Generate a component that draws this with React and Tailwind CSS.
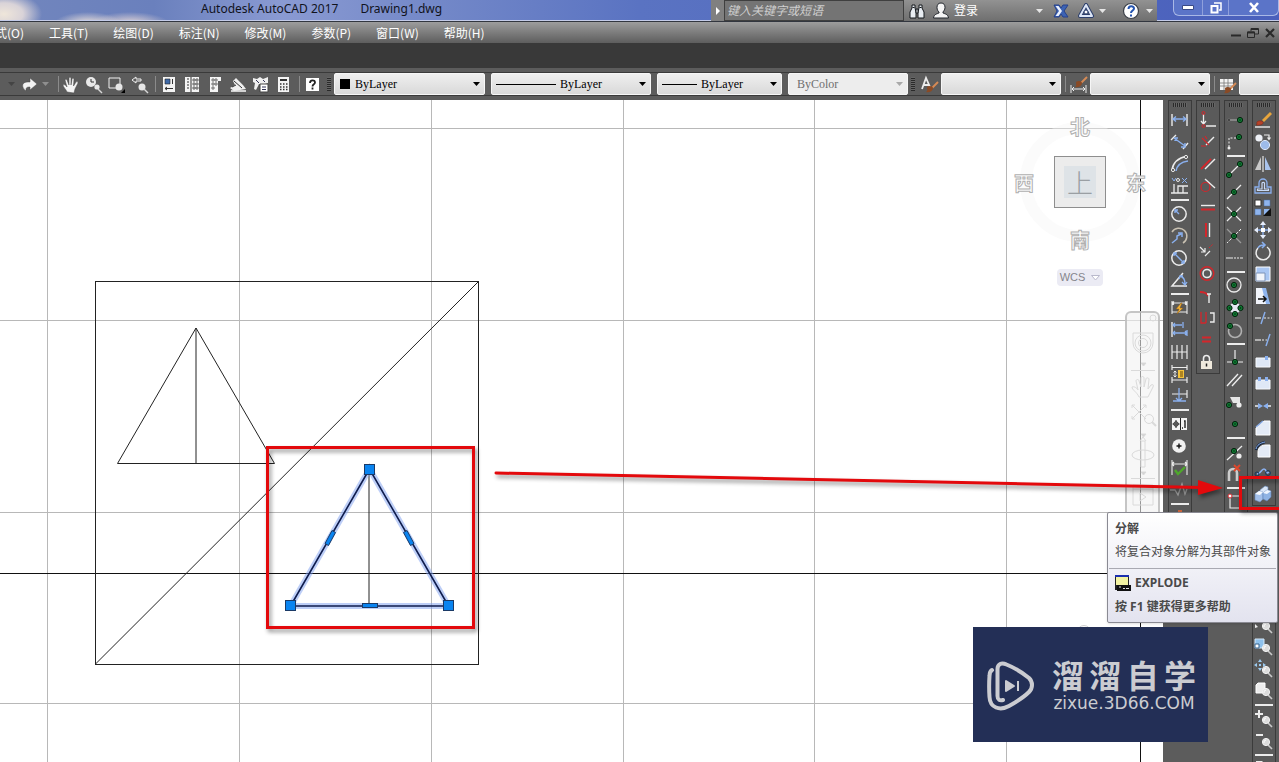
import { useState } from "react";

const W = "#ececec";
const B = "#8ab0ee";
const R = "#d3262b";
const G = "#9a9a9a";

const UI_FONT = "font-['Noto_Sans','Noto_Sans_CJK_SC',sans-serif]";
const CJK_FONT = "font-['Noto_Sans_CJK_SC',sans-serif]";

/* ---------- small drawing helpers ---------- */

function Dot({ x, y }) {
  return (
    <>
      <circle cx={x} cy={y} r="2.6" fill="#0f7d34" stroke="#03210c" />
      <circle cx={x} cy={y} r="0.8" fill="#03210c" />
    </>
  );
}

function Caret({ className = "text-black" }) {
  return (
    <svg width="7" height="4" viewBox="0 0 7 4" className={`shrink-0 ${className}`} aria-hidden="true">
      <path d="M0 0h7L3.5 4z" fill="currentColor" />
    </svg>
  );
}

function Brush({ x = 0, y = 0 }) {
  return (
    <g transform={`translate(${x} ${y})`}>
      <path d="M4 5 L10 -1" stroke="#d58a55" strokeWidth="2" />
      <path d="M-1 4c2-2 6-1 6 1s-2 5-7 4c2-1 1-3 1-5z" fill="#8a4a25" />
    </g>
  );
}

function Lens({ x = 13, y = 12 }) {
  return (
    <>
      <path d={`M${x + 2} ${y + 3}l4 4`} stroke="#c9c9c9" strokeWidth="1.6" />
      <circle cx={x} cy={y} r="3.6" fill="#dcdcdc" stroke="#f4f4f4" />
      <path d={`M${x - 2} ${y + 1}a2.4 2.4 0 0 1 2-3`} stroke="#fff" />
    </>
  );
}

const DimEnds = <path d="M3 5v12M18 5v12" stroke={W} strokeWidth="1.4" />;

/* ---------- icons for the docked toolbars, 22x22 ---------- */

const icons = {
  // dimension
  dimLinear: <>{DimEnds}<path d="M4 10h13M7 7.5l-3 2.5 3 2.5M14 7.5l3 2.5-3 2.5" stroke={B} strokeWidth="1.4" /></>,
  dimAligned: <><path d="M7 4l-5 5M19 12l-5 6" stroke={W} strokeWidth="1.4" /><path d="M5 7l11 8M6 10V7h3M16 12v4h-4" stroke={B} strokeWidth="1.4" /></>,
  dimArc: <><path d="M3 17C4 9 9 5 18 3" stroke={W} strokeWidth="1.6" /><path d="M7 18c1-6 5-9 12-10" stroke={B} strokeWidth="1.5" /><circle cx="4" cy="17" r="1.6" fill="#555" stroke={W} /><circle cx="17" cy="4" r="1.6" fill="#555" stroke={W} /></>,
  dimOrdinate: <><path d="M5 9v9M2 18h17M9 18v-7h5v7M14 11h5" stroke={W} strokeWidth="1.3" /><path d="M3 3l2 3 2-3M13 3l5 5M18 3l-5 5" stroke={B} /><circle cx="9" cy="5" r="1.5" stroke={W} /></>,
  dimRadius: <><circle cx="10" cy="11" r="7.2" stroke={W} strokeWidth="1.5" /><path d="M10 11L6 7M6 10V7h3" stroke={B} strokeWidth="1.4" /></>,
  dimJogged: <><path d="M3 7a8 8 0 1 1 11 11" stroke="#c9c1b2" strokeWidth="1.5" /><path d="M3 18l5-4 0-3 4-2M9 8h4v4" stroke={B} strokeWidth="1.5" /></>,
  dimDiameter: <><circle cx="10" cy="11" r="7.2" stroke={W} strokeWidth="1.5" /><path d="M5 6l10 10M5 9V6h3M15 13v3h-3" stroke={B} strokeWidth="1.4" /></>,
  dimAngular: <><path d="M14 4L3 17h15" stroke={W} strokeWidth="1.5" /><path d="M11 7c4 1 5 4 5 8M13 13l3 3 2-3M10 10l1-3 3 0" stroke={B} strokeWidth="1.3" /></>,
  dimQuick: <><path d="M3 4v13M18 4v13M3 6h15M3 15h15M5 4.500L3 6l2 1.500M16 4.500L18 6l-2 1.500" stroke={W} strokeWidth="1.1" /><path d="M12 6l-5 6h3l-2 5 6-6h-3l2-5z" fill="#f5b53a" stroke="#8e5a12" strokeWidth="0.5" /></>,
  dimBaseline: <><path d="M3 3v15" stroke={W} strokeWidth="1.4" /><path d="M4 6h9M4 14h14M14 3v6M18 11v6M6 4L4 6l2 2M6 12l-2 2 2 2M16 12l2 2-2 2" stroke={B} strokeWidth="1.3" /></>,
  dimContinue: <><path d="M3 4v14M8 4v14M13 4v14M18 4v14" stroke={W} strokeWidth="1.2" /><path d="M3 11h15" stroke={W} /></>,
  dimSpace: <><path d="M3 2v5M18 2v5M3 4.500h15M3 14v6M18 14v6M3 17h15" stroke={W} strokeWidth="1.2" /><path d="M9 7h6v8H9z" fill="#f5c33c" /><path d="M11 9h3M11 11h3M11 13h3" stroke="#6b4607" /><path d="M6 8v6M4.500 9.500L6 8l1.500 1.500M4.500 12.500L6 14l1.500-1.500" stroke={W} /></>,
  dimBreak: <><path d="M3 9h15M18 5v8" stroke={W} strokeWidth="1.2" /><path d="M10 3v13M4 16h13M7 13l3 3 3-3" stroke={B} strokeWidth="1.3" /></>,
  tolerance: <><path d="M3 5h15v12H3z" fill="#f4f4f4" /><path d="M11.500 5v12M7 7v8M3.500 11h7" stroke="#222" /><circle cx="7" cy="11" r="2.200" stroke="#222" /><path d="M13 15h1M15 8h1v7" stroke="#222" strokeWidth="1.4" /></>,
  centerMark: <><circle cx="10" cy="11" r="6.8" fill="#f0f0f0" /><path d="M10 8.500v5M7.500 11h5" stroke="#111" strokeWidth="1.4" /></>,
  inspect: <><path d="M3 3v15M18 3v15M3 7h15M5 5L3 7l2 2M16 5l2 2-2 2" stroke={W} strokeWidth="1.1" /><path d="M6 13l3 4 7-7" stroke="#4ea82b" strokeWidth="2.4" /></>,
  jogLine: <path d="M1 11h5l3 5 4-11 3 10 2-5" stroke={G} strokeWidth="1.4" />,
  dimEdit: <><path d="M3 5v12M18 5v12M4 12h14" stroke={W} /><path d="M9 4h4" stroke="#c8643c" strokeWidth="2" /></>,

  // geometric constraints
  coincident: <><path d="M6.500 5v10M4 12l2.500 3L9 12M9 17h10" stroke={W} strokeWidth="1.3" /><circle cx="6.500" cy="4" r="1.5" stroke={R} /><circle cx="6.500" cy="17" r="1.5" stroke={R} /></>,
  perpendicular: <><path d="M9 14l8-8" stroke={W} strokeWidth="1.4" /><path d="M5 7l7 7M4 15l5 0M8 5l2 3" stroke={R} strokeWidth="1.2" /></>,
  parallel: <><path d="M8 16L18 6" stroke={W} strokeWidth="1.5" /><path d="M4 16L14 6" stroke={R} strokeWidth="1.8" /></>,
  tangent: <><circle cx="8.5" cy="12" r="4.5" stroke={R} strokeWidth="1.2" /><path d="M8 4l10 9" stroke={W} strokeWidth="1.4" /></>,
  horizontal: <><path d="M4 8.500h14" stroke={W} strokeWidth="1.4" /><path d="M4 12.500h14" stroke={R} strokeWidth="2" /></>,
  vertical: <><path d="M12.500 4v14" stroke={W} strokeWidth="1.4" /><path d="M9 4v14" stroke={R} strokeWidth="2" /></>,
  collinear: <><path d="M3 6l5 5M8 7v4H4M8 15l5-5" stroke={W} strokeWidth="1.2" /><path d="M12 7l4-4" stroke={R} strokeDasharray="2 1" /></>,
  concentric: <><circle cx="10" cy="10.5" r="6.8" stroke={R} strokeWidth="1.4" /><circle cx="10" cy="10.5" r="4" stroke={W} strokeWidth="1.6" /></>,
  smooth: <><path d="M3 7c5 0 7 1 8 4" stroke={R} strokeWidth="1.8" /><path d="M10 9h4M12 9v9" stroke={W} strokeWidth="1.4" /></>,
  symmetric: <><path d="M4 5v11h3M9 5v11M4 16h5" stroke={R} strokeWidth="1.3" /><path d="M13 6h4v9h-4" stroke={W} strokeWidth="1.4" /></>,
  equal: <path d="M5 8.500h9M5 12.500h9" stroke={R} strokeWidth="2" />,
  fix: <><path d="M6.500 11V7.500a3 3 0 0 1 6 0v3.500" stroke={W} strokeWidth="1.6" /><path d="M4 10h11v8H4z" fill="#efe9dc" /><path d="M9.500 12.500v3" stroke="#222" strokeWidth="1.5" /></>,

  // object snaps
  snapTemp: <><path d="M4 11h10" stroke={G} strokeWidth="1.4" /><circle cx="4" cy="11" r="1.2" fill="#111" stroke={G} strokeWidth="0.5" /><Dot x={15} y={11} /></>,
  snapFrom: <><path d="M4 16V7h10" stroke={W} strokeDasharray="2 1.5" /><circle cx="4" cy="17" r="1.5" fill={W} /><Dot x={14} y={6} /></>,
  snapEnd: <><path d="M4 16L14 6" stroke={W} strokeWidth="1.3" /><Dot x={4} y={16} /><Dot x={15} y={5} /></>,
  snapMid: <><path d="M2 18L16 4" stroke={W} strokeWidth="1.3" /><Dot x={9} y={11} /></>,
  snapInt: <><path d="M2 4l14 14M16 4L2 18" stroke={W} strokeWidth="1.2" /><Dot x={9} y={11} /></>,
  snapApp: <><path d="M2 4l14 14" stroke={G} strokeWidth="1.2" /><path d="M16 4L2 18" stroke={W} strokeDasharray="3 1.5" /><Dot x={9} y={11} /></>,
  snapExt: <path d="M1 11h7M9 11h2M12 11h2M15 11h3" stroke={W} strokeWidth="1.2" />,
  snapCen: <><circle cx="9" cy="10" r="7" stroke={W} strokeWidth="1.3" /><Dot x={9} y={10} /></>,
  snapQua: <><circle cx="10" cy="11" r="5.5" fill="#e4e9f2" /><Dot x={10} y={5} /><Dot x={10} y={17} /><Dot x={4.5} y={11} /><Dot x={15.5} y={11} /></>,
  snapTan: <><circle cx="10" cy="12" r="6.5" stroke="#b0b0b0" strokeWidth="1.6" /><Dot x={5} y={7} /></>,
  snapPer: <><path d="M10 3v13M2 15h16" stroke={W} strokeWidth="1.2" /><Dot x={10} y={15} /></>,
  snapPar: <path d="M2 17L13 5M7 17L17 6" stroke={W} strokeWidth="1.4" />,
  snapIns: <><path d="M5 6h10v6H8z" fill="#e6e6e6" /><circle cx="14" cy="14" r="2.6" fill={W} /><Dot x={4} y={14} /></>,
  snapNode: <Dot x={10} y={11} />,
  snapNea: <><path d="M2 19L17 5" stroke={W} strokeWidth="1.3" /><circle cx="14" cy="15" r="2.6" fill={W} /><Dot x={9} y={10} /></>,
  snapNone: <><path d="M4 18V10a4 4 0 0 1 8 0v8" stroke="#cdcdcd" strokeWidth="2.600" /><path d="M9 2l6 6M15 2L9 8" stroke="#e0472b" strokeWidth="1.8" /></>,
  snapSettings: <><path d="M5 5h9M5 5v12h9" stroke={W} strokeWidth="1.2" /><circle cx="5" cy="5" r="2" fill="#fff" stroke={R} /></>,

  // modify
  erase: <><path d="M10 12l8-8" stroke="#e8a53c" strokeWidth="2.8" /><path d="M4 13c2-2 5-1 6 0s-1 4-7 3c2-1 0-2 1-3z" fill="#b6432a" stroke="#7d2514" strokeWidth="0.5" /><path d="M2 18h15" stroke={W} strokeWidth="1.4" /></>,
  copy: <><circle cx="6" cy="7" r="3.6" fill="#eef1f7" /><circle cx="12" cy="14" r="4.6" fill="#9dbbe9" stroke="#dfe8f7" /><path d="M11 4h5v4M14.500 6.500L16 8.500l1.500-2" stroke={W} strokeWidth="1.2" /></>,
  mirror: <><path d="M8 4v13H2z" fill="#c9c9c9" /><path d="M12 4v13h6z" fill="#a9c3ec" /><path d="M10 3v16" stroke="#fff" /></>,
  offset: <><path d="M2 18v-6h4V8a4 4 0 0 1 8 0v4h4v6z" stroke={B} strokeWidth="1.3" /><path d="M4.500 15.500v-1.500H9V8a1.500 1.500 0 0 1 2.500 0v6h4v1.500z" stroke="#c8daf7" strokeWidth="1.2" /></>,
  array: <><path d="M2 3h6v6H2z" fill="#fff" stroke="#333" /><path d="M11 3h6v6h-6zM2 12h6v6H2z" fill="#8fb5ee" stroke="#4a6da5" strokeWidth="0.5" /><path d="M11 12h6v6h-6z" fill="#8fb5ee" /><path d="M18 11v8h-8z" fill="#111" /></>,
  move: <><path d="M10 2l3 4H7zM10 20l3-4H7zM1 11l4-3v6zM19 11l-4-3v6z" fill="#e8eefb" /><path d="M10 6v10M5 11h10" stroke={B} strokeWidth="1.4" /><path d="M8 9h4v4H8z" fill="#fff" /></>,
  rotate: <><path d="M5 7a7 7 0 1 0 9-1" stroke={W} strokeWidth="1.5" /><path d="M5 7c1-2 3-3 6-3M9 1l3 3-3 3" stroke={B} strokeWidth="1.6" /></>,
  scale: <><path d="M3 4h14v14H3z" fill="#a9c6f2" stroke="#fff" /><path d="M3 10h9v8H3z" fill="#f1f4fa" stroke="#7d93b8" /></>,
  stretch: <><path d="M3 3h7l7 16H3z" fill="#f1f4fa" /><path d="M9 3h4l4 16h-4z" fill="#8fb5ee" /><path d="M5 14h8M10 11l3 3-3 3" stroke="#111" strokeWidth="1.5" /></>,
  trim: <><path d="M12 5L8 17" stroke={B} strokeWidth="1.4" /><path d="M2 11h6" stroke={W} strokeWidth="1.2" /><path d="M11 11h8" stroke={W} strokeDasharray="2 1.5" /></>,
  extend: <><path d="M17 5l-4 12" stroke={B} strokeWidth="1.4" /><path d="M2 11h6" stroke={W} strokeWidth="1.2" /><path d="M9 11h5" stroke={W} strokeDasharray="2 1.5" /></>,
  breakPoint: <><path d="M3 7h14v9H3z" fill="#dfe8f6" stroke="#f7f9fc" /><path d="M12 5h3v4h-3z" fill={B} /></>,
  breakAt: <><path d="M3 7h14v9H3z" fill="#dfe8f6" stroke="#f7f9fc" /><path d="M5 4h3v4H5zM12 4h3v4h-3z" fill={B} /></>,
  join: <><path d="M2 11h5M13 11h5" stroke={W} strokeWidth="1.4" /><path d="M5 8l5 3-5 3zM15 8l-5 3 5 3z" fill={B} /></>,
  chamfer: <><path d="M3 18V11l8-7h6v14z" fill="#e4ebf6" stroke="#fff" /><path d="M3 10l7-6" stroke={B} strokeWidth="1.2" /></>,
  fillet: <><path d="M5 18v-5c0-5 4-7 8-7h4v12z" fill="#e4ebf6" stroke="#fff" /><path d="M3 11c1-5 4-7 9-8" stroke="#1b2940" strokeWidth="2.4" /><path d="M3 10c1-4 4-6 9-7" stroke={B} /></>,
  blend: <><path d="M4 13c4 0 4-5 7-5s2 6 5 3" stroke={B} strokeWidth="1.6" /><circle cx="4" cy="13" r="2" stroke="#14375e" /><circle cx="15" cy="12" r="2.4" stroke="#14375e" /></>,
  explode: <>
    <path d="M7 7l5-4 3 1v5l-4 3-4-1z" fill="#dbe7f8" stroke="#6d8fc0" strokeWidth="0.6" />
    <path d="M2 11l4-3 4 1v7l-3 3-5-2z" fill="#a3c0ea" stroke="#6d8fc0" strokeWidth="0.6" />
    <path d="M2 11l4-3 4 1-3 3z" fill="#f6f9fe" />
    <path d="M10 10l4-3 4 1v6l-4 4-4-2z" fill="#8fb3e4" stroke="#5f83b8" strokeWidth="0.6" />
    <path d="M10 10l4-3 4 1-4 3z" fill="#eef4fd" />
  </>,

  // zoom
  zoomWindow: <><path d="M2 4h9v8H2z" stroke={W} /><Lens /></>,
  zoomDynamic: <><path d="M2 10l3 3-3 1z" fill={W} /><Lens /></>,
  zoomScale: <><path d="M2 3h9v9H2z" fill="#8ec1ec" stroke="#d4e8f9" /><path d="M2 8h4v4H2z" fill="#fff" stroke="#35638d" /><Lens /></>,
  zoomCenter: <><path d="M7 1l2 3H5zM7 13l2-3H5zM1 7l3-2v4zM13 7l-3-2v4z" fill="#9ccbf0" /><path d="M6 6h2v2H6z" fill="#9ccbf0" /><Lens /></>,
  zoomObject: <><path d="M3 5l2-2h7v8l-2 2H3z" fill="#ececec" stroke="#fff" /><Lens /></>,
  zoomIn: <><path d="M6 2v8M2 6h8" stroke={W} strokeWidth="2" /><Lens /></>,
  zoomOut: <><path d="M3 5h7" stroke={W} strokeWidth="2" /><Lens /></>,
  zoomAll: <><path d="M3 3h6l3 3v8H3z" fill="#ececec" /><Lens /></>,
};

const SEP = "|";

const dimensionBar = [
  "dimLinear", "dimAligned", "dimArc", "dimOrdinate", SEP,
  "dimRadius", "dimJogged", "dimDiameter", "dimAngular", SEP,
  "dimQuick", "dimBaseline", "dimContinue", "dimSpace", "dimBreak", SEP,
  "tolerance", "centerMark", "inspect", "jogLine", SEP, "dimEdit",
];
const constraintBar = [
  "coincident", "perpendicular", "parallel", "tangent", "horizontal", "vertical",
  "collinear", "concentric", "smooth", "symmetric", "equal", "fix",
];
const snapBar = [
  "snapTemp", "snapFrom", SEP,
  "snapEnd", "snapMid", "snapInt", "snapApp", "snapExt", SEP,
  "snapCen", "snapQua", "snapTan", SEP,
  "snapPer", "snapPar", "snapIns", "snapNode", SEP,
  "snapNea", "snapNone", SEP, "snapSettings",
];
const modifyBar = [
  "erase", "copy", "mirror", "offset", "array", "move", "rotate", "scale", "stretch",
  "trim", "extend", "breakPoint", "breakAt", "join", "chamfer", "fillet", "blend", "explode",
];
const zoomBar = [
  "zoomWindow", "zoomDynamic", "zoomScale", "zoomCenter", "zoomObject", SEP,
  "zoomIn", "zoomOut", SEP, "zoomAll",
];

function Dock({ label, tools }) {
  return (
    <div role="toolbar" aria-label={label} className="w-6 shrink-0 flex flex-col border border-[#3b3b3b] bg-[#5a5a5a]">
      <div className="h-2 pt-0.5 px-1">
        <div className="h-1 bg-[repeating-linear-gradient(90deg,#2a2a2a_0_1px,#666_1px_2px)]" />
      </div>
      {tools.map((name, i) =>
        name === SEP ? (
          <div key={i} className="h-1.5 flex items-center px-0.5">
            <div className="h-0.5 w-full bg-[#ececec]" />
          </div>
        ) : (
          <button key={i} type="button" aria-label={name} className="h-[22px] w-[22px] shrink-0 hover:bg-white/20">
            <svg width="22" height="22" viewBox="0 0 22 22" fill="none" className="block">
              {icons[name]}
            </svg>
          </button>
        )
      )}
    </div>
  );
}

/* ---------- title bar ---------- */

function TitleBar() {
  return (
    <header className="h-[22px] flex overflow-hidden border-b border-[#32363f] bg-[radial-gradient(ellipse_38px_22px_at_4px_14px,#efe6da_0%,#d9d3d8_50%,transparent_100%),radial-gradient(ellipse_34px_12px_at_88px_24px,#f3e6dc_0%,transparent_100%),radial-gradient(ellipse_40px_12px_at_130px_24px,#ecdcd8_0%,transparent_100%),linear-gradient(90deg,#7286bd_0%,#6a80bd_12%,#8a9ad2_22%,#7388c8_34%,#5a73c2_50%,#4a60bc_100%)]">
      <h1 className={`flex-1 min-w-0 flex items-center gap-[22px] pl-[201px] pb-0.5 text-xs leading-5 whitespace-nowrap text-[#11131c] border-b border-[#c3cbe8] ${UI_FONT}`}>
        <span>Autodesk AutoCAD 2017</span>
        <span>Drawing1.dwg</span>
      </h1>
      <div className={`w-[446px] shrink-0 flex items-center bg-linear-to-b from-[#929292] to-[#6f6f6f] text-xs text-white ${UI_FONT}`}>
        <button type="button" aria-label="折叠搜索" className="w-[13px] h-full flex items-center justify-center bg-[#808080]">
          <svg width="4" height="8" viewBox="0 0 4 8"><path d="M0 0l4 4-4 4z" fill="#fff" /></svg>
        </button>
        <input
          aria-label="搜索"
          placeholder="键入关键字或短语"
          className="w-[180px] h-full bg-[#747474] border border-[#3f3f3f] px-0.5 italic text-xs placeholder:text-[#cfcfcf]"
        />
        <button type="button" aria-label="查找" className="ml-1">
          <svg width="18" height="18" viewBox="0 0 18 18" stroke="#15181d" fill="#e8edf2">
            <path d="M4 3h3v3l1 4v6H2v-6l2-4zM11 3h3v3l2 4v6h-6v-6l1-4z" />
            <path d="M8 7h2v4H8z" />
            <path d="M4.500 5.500h2M11.500 5.500h2" />
          </svg>
        </button>
        <button type="button" className="ml-1.5 flex items-center gap-1">
          <svg width="18" height="18" viewBox="0 0 18 18" stroke="#22262d" fill="#f4f4f4">
            <path d="M9 1c3 0 4 2 4 4.500S11.500 9 11 10v1c2 1 5 1 5.500 5h-15C2 12 5 12 7 11v-1C6 9 5 8 5 5.500S6 1 9 1z" />
          </svg>
          <span>登录</span>
        </button>
        <Caret className="ml-[58px] text-[#e6e6e6]" />
        <button type="button" aria-label="Exchange" className="ml-2.5">
          <svg width="16" height="14" viewBox="0 0 16 14" stroke="#26418b" fill="none">
            <path d="M1 1h5l2 3 2-3h5l-4 6 4 6h-5l-2-3-2 3H1l3-6z" fill="#3d63b4" />
            <path d="M2.500 2h3L9 7l-3.500 5h-3L6 7z" fill="#eaf0fc" stroke="none" />
          </svg>
        </button>
        <button type="button" aria-label="A360" className="ml-2 flex items-center gap-1">
          <svg width="18" height="16" viewBox="0 0 18 16" fill="none">
            <path d="M9 2l6 11H3z" stroke="#2c3f6d" strokeWidth="4" strokeLinejoin="round" />
            <path d="M9 2l6 11H3z" stroke="#dde6f6" strokeWidth="2" strokeLinejoin="round" />
            <circle cx="9" cy="9" r="2" fill="#fff" stroke="#2c3f6d" />
          </svg>
          <Caret className="text-[#e6e6e6]" />
        </button>
        <button type="button" aria-label="帮助" className="ml-auto mr-1 flex items-center gap-1.5">
          <svg width="18" height="18" viewBox="0 0 18 18" fill="none">
            <circle cx="9" cy="9" r="7.5" fill="#fff" stroke="#3b3f47" strokeWidth="1.2" />
            <path d="M6.500 7c0-3.500 5.500-3.500 5.500-.5 0 2-3 2-3 4.500M9 12.500v2" stroke="#2454b0" strokeWidth="2" />
          </svg>
          <Caret className="text-[#e6e6e6]" />
        </button>
      </div>
      <div className="w-[122px] shrink-0 pl-4 border-b border-[#c3cbe8]">
        <div className="h-4 flex border border-t-0 border-[#a9b8e6] rounded-b-md divide-x divide-[#8fa0dc] bg-[#5b74c8]">
          <button type="button" aria-label="最小化" className="w-[29px] flex justify-center items-center">
            <svg width="12" height="5" viewBox="0 0 12 5"><path d="M.5.5h11v4H.5z" fill="#fff" stroke="#3a4a86" /></svg>
          </button>
          <button type="button" aria-label="还原" className="w-[26px] flex justify-center items-center">
            <svg width="12" height="12" viewBox="0 0 12 12" fill="none">
              <path d="M4 1h7v7h-2" stroke="#fff" strokeWidth="1.5" />
              <path d="M1.500 4h6v6.500h-6z" stroke="#fff" strokeWidth="2" />
            </svg>
          </button>
          <button type="button" aria-label="关闭" className="flex-1 flex justify-center items-center">
            <svg width="12" height="11" viewBox="0 0 12 11"><path d="M2 1l8 9M10 1L2 10" stroke="#fff" strokeWidth="2.6" /></svg>
          </button>
        </div>
      </div>
    </header>
  );
}

/* ---------- menu bar ---------- */

const menus = ["格式(O)", "工具(T)", "绘图(D)", "标注(N)", "修改(M)", "参数(P)", "窗口(W)", "帮助(H)"];

function MenuBar() {
  return (
    <nav className="h-[21px] flex items-center justify-between overflow-hidden bg-linear-to-b from-[#9d9d9d] to-[#5e5e5e]">
      <div className={`-ml-[17px] flex gap-[25px] text-xs leading-5 text-white whitespace-nowrap ${CJK_FONT}`}>
        {menus.map((m) => (
          <button key={m} type="button">{m}</button>
        ))}
      </div>
      <div className="flex items-center gap-1.5 pr-1">
        <button type="button" aria-label="最小化图形">
          <svg width="11" height="11" viewBox="0 0 11 11"><path d="M1 8.500h10" stroke="#2a2a2a" strokeWidth="2" /></svg>
        </button>
        <button type="button" aria-label="还原图形">
          <svg width="12" height="12" viewBox="0 0 12 12" fill="none" stroke="#2a2a2a">
            <path d="M4 4V1.500h7.500V7H8" /><path d="M4 2h7" strokeWidth="2" />
            <path d="M.5 5h7v5.500h-7z" /><path d="M.5 5.500h7" strokeWidth="2" />
          </svg>
        </button>
        <button type="button" aria-label="关闭图形">
          <svg width="10" height="10" viewBox="0 0 10 10"><path d="M1 1l8 8M9 1L1 9" stroke="#2a2a2a" strokeWidth="2.2" /></svg>
        </button>
      </div>
    </nav>
  );
}

/* ---------- standard + properties toolbar ---------- */

const standardTools = [
  { label: "实时平移", d: <path d="M6 17c-1-3-4-5-4-7 1-1 3 0 4 2L4 5c0-1 2-1 2 0l2 5V3c0-1 2-1 2 0v7l1-6c0-1 2-1 2 0l-.5 7L15 7c1-1 2 0 2 1l-3 6-1 4z" fill="#f4f4f4" stroke="#444" strokeWidth="0.5" /> },
  { label: "实时缩放", d: <><circle cx="7" cy="7" r="5" fill="#e9e9e9" /><path d="M7 4v3h3" stroke="#333" /><circle cx="13" cy="12" r="2.6" fill="#e9e9e9" /><path d="M14 14l4 4" stroke="#d8d8d8" strokeWidth="1.5" /></> },
  { label: "窗口缩放", d: <><path d="M2 3h11v10H2z" stroke="#f0f0f0" /><circle cx="12" cy="12" r="3.5" fill="#e6e6e6" /><path d="M18 14v4h-4z" fill="#000" /></> },
  { label: "缩放上一个", d: <><path d="M2 5l4-3v2h5v2H6v2z" stroke="#f0f0f0" /><circle cx="12" cy="12" r="3.5" fill="#e6e6e6" /><path d="M14 14l4 4" stroke="#d8d8d8" strokeWidth="1.5" /></> },
];
const paletteTools = [
  { label: "特性", d: <><path d="M4 2h12v15H4z" fill="#f4f4f4" /><path d="M6 4h5v5H6z" fill="#3f6aa8" stroke="#222" strokeWidth="0.6" /><path d="M13.500 4v5M6 13.500h8M8 12l-2 1.500L8 15" stroke="#333" /></> },
  { label: "设计中心", d: <><path d="M3 2h14v15H3z" fill="#f4f4f4" /><path d="M9 2v15M5 4h2M5 7h2M5 10h2M5 13h2" stroke="#333" /><path d="M11 4h2v2h-2zM14 4h2v2h-2zM11 8h2v2h-2zM14 8h2v2h-2zM11 12h2v2h-2zM14 12h2v2h-2z" stroke="#444" strokeWidth="0.8" /></> },
  { label: "工具选项板", d: <><path d="M5 2h11v4h-3v11H5z" fill="#f4f4f4" /><path d="M7 4h2v2H7zM10 4h2v2h-2zM7 8h2v2H7zM10 8h2v2h-2zM7 12h2v2H7z" stroke="#555" strokeWidth="0.8" /></> },
  { label: "图纸集管理器", d: <><path d="M2 13l5-3-2-4 3-3 7 7 3 4-12 2z" fill="#f0f0f0" /><path d="M6 6l8 7M4 12l4-2" stroke="#333" /><path d="M3 16h15" stroke="#f0f0f0" strokeWidth="1.6" /></> },
  { label: "标记集管理器", d: <><path d="M2 3l4 1 3-2 3 2 5-2v6l-3 1H8l-3 6-2-1 1-6-2-1z" fill="#f0f0f0" /><path d="M9 9h8v8H9z" fill="#fff" stroke="#444" /><path d="M11 12h4M11 14.500h4M5 5l3 3M12 5l2 2" stroke="#335" /></> },
  { label: "快速计算器", d: <><path d="M4 2h11v15H4z" fill="#f4f4f4" /><path d="M6 5h7" stroke="#333" strokeWidth="2" /><path d="M6 9h1.500M9 9h1.500M12 9h1.500M6 12h1.500M9 12h1.500M12 12h1.500M6 14.500h1.500M9 14.500h1.500M12 14.500h1.500" stroke="#333" strokeWidth="1.4" /></> },
];

function Tool({ label, children }) {
  return (
    <button type="button" aria-label={label} className="w-[23px] h-full shrink-0 flex items-center justify-center">
      <svg width="19" height="19" viewBox="0 0 19 19" fill="none">{children}</svg>
    </button>
  );
}

function VSep() {
  return <div className="w-px h-4 ml-1 mr-px shrink-0 bg-[#8b8b8b]" />;
}

function Grip() {
  return (
    <div className="w-1 h-3.5 mx-[3px] shrink-0 bg-[repeating-linear-gradient(0deg,#2a2a2a_0_1px,#666_1px_2px)]" />
  );
}

function Combo({ label, value, width, lead, disabled }) {
  const [v, setV] = useState(value);
  return (
    <div
      className={`relative h-[22px] shrink-0 flex items-center rounded-xs border border-[#f6f6f6] px-1 gap-1 ${width} ${
        disabled ? "bg-[#ededed]" : "bg-linear-to-b from-[#efefef] to-[#d9d9d9]"
      }`}
    >
      {lead}
      <select
        aria-label={label}
        value={v}
        disabled={disabled}
        onChange={(e) => setV(e.target.value)}
        className={`flex-1 min-w-0 h-full appearance-none bg-transparent text-xs outline-none font-['Liberation_Serif',serif] ${
          disabled ? "text-[#6f6f6f] pl-1" : "text-black"
        }`}
      >
        <option value={value}>{value}</option>
      </select>
      <Caret className={`pointer-events-none ${disabled ? "text-[#a9a9a9]" : "text-black"}`} />
    </div>
  );
}

function Toolbar() {
  return (
    <div className="shrink-0 py-1 bg-[#5c5c5c]">
      <div className="h-6 flex items-center overflow-hidden border-y border-[#3a3a3a]">
        <div className="w-[58px] shrink-0 flex items-center">
          <Caret className="ml-2 text-[#444]" />
          <button type="button" aria-label="重做" className="ml-1.5">
            <svg width="17" height="15" viewBox="0 0 17 15">
              <path d="M9 1l7 6-7 6v-3c-4 0-4 1-4 4-5-4-5-10 4-9z" fill="#f2f2f2" stroke="#4a4a4a" strokeWidth="0.5" />
            </svg>
          </button>
          <Caret className="ml-1 text-[#8f8f8f]" />
        </div>
        <div className="w-px h-4 shrink-0 bg-[#8b8b8b]" />
        <div className="flex h-full">
          {standardTools.map((t) => <Tool key={t.label} label={t.label}>{t.d}</Tool>)}
        </div>
        <VSep />
        <div className="flex h-full">
          {paletteTools.map((t) => <Tool key={t.label} label={t.label}>{t.d}</Tool>)}
        </div>
        <VSep />
        <Tool label="帮助">
          <path d="M3 3h13v13H3z" fill="#fff" />
          <path d="M7 8c0-3.500 5-3.500 5-.5 0 2-2.500 1.500-2.500 4M9.500 12.500v2" stroke="#222" strokeWidth="1.8" />
        </Tool>
        <Grip />
        <Combo
          label="颜色"
          value="ByLayer"
          width="w-[151px]"
          lead={<span className="w-2.5 h-2.5 mx-px bg-black shrink-0" />}
        />
        <div className="w-1.5 shrink-0" />
        <Combo
          label="线型"
          value="ByLayer"
          width="w-40"
          lead={<span className="w-[60px] h-px bg-black shrink-0" />}
        />
        <div className="w-1.5 shrink-0" />
        <Combo
          label="线宽"
          value="ByLayer"
          width="w-[125px]"
          lead={<span className="w-[35px] h-px bg-black shrink-0" />}
        />
        <div className="w-1.5 shrink-0" />
        <Combo label="打印样式" value="ByColor" width="w-[120px]" disabled />
        <Grip />
        <Tool label="文字样式">
          <path d="M2 14L6 3l4 9M3 10h6" stroke="#ececec" strokeWidth="1.8" />
          <Brush x={8} y={8} />
        </Tool>
        <Combo label="文字样式列表" value="" width="w-[120px]" />
        <VSep />
        <Tool label="标注样式">
          <path d="M2 10v8M17 10v8M3 14h13M5 12l-2 2 2 2M14 12l2 2-2 2" stroke="#ececec" />
          <Brush x={8} y={3} />
        </Tool>
        <Combo label="标注样式列表" value="" width="w-[120px]" />
        <VSep />
        <Tool label="表格样式">
          <path d="M2 4h13v11H2z" fill="#f4f4f4" />
          <path d="M2 8h13M2 11h13M6 4v11M10 4v11" stroke="#777" strokeWidth="0.8" />
          <Brush x={8} y={9} />
        </Tool>
        <Combo label="表格样式列表" value="" width="w-[120px]" />
      </div>
    </div>
  );
}

/* ---------- model space ---------- */

const gridX = [47, 239, 431, 623, 814, 1006];
const gridY = [28, 220, 412, 603];

function Drawing() {
  return (
    <svg className="absolute inset-0 w-full h-full" fill="none" shapeRendering="crispEdges">
      <g stroke="#b8b8b8">
        {gridX.map((x) => <line key={x} x1={x + 0.5} x2={x + 0.5} y1="0" y2="100%" />)}
        {gridY.map((y) => <line key={y} y1={y + 0.5} y2={y + 0.5} x1="0" x2="100%" />)}
      </g>
      <circle cx="1084" cy="532" r="6.5" stroke="#cfcfcf" shapeRendering="auto" />
      <path d="M1140.500 0v2000M0 473.500h3000" stroke="#111" />
      <path d="M95 181.500h383.500V564.500H95z" stroke="#222" />
      <g stroke="#222" shapeRendering="geometricPrecision">
        <path d="M95 564.500L478.500 181.500" />
        <path d="M196 228L117.500 363.500H274.500Z M196 228V363" />
        <path d="M369 370V505" />
        <path d="M369.500 369L290.500 506H448.500Z" stroke="#7c9df0" strokeOpacity="0.5" strokeWidth="6" />
        <path d="M369.500 369L290.500 506H448.500Z" stroke="#0f1d4e" strokeWidth="1.6" />
      </g>
      <g fill="#0a84f0" stroke="#1b3a66">
        <path d="M364.500 364.500h10v10h-10zM285.500 500.500h10v10h-10zM443.500 500.500h10v10h-10z" />
        <path d="M362.500 503.500h15v4h-15z" />
        <g shapeRendering="geometricPrecision">
          <path d="M332 430.500l3.500 2-7 13-3.500-2z" />
          <path d="M407 430.500l-3.500 2 7 13 3.500-2z" />
        </g>
      </g>
    </svg>
  );
}

function ViewCube() {
  const letter = `absolute text-xl leading-5 font-bold text-white [-webkit-text-stroke:1px_#b0b0b0] ${CJK_FONT}`;
  return (
    <div className="absolute top-[17px] right-[18px] w-[130px] h-[170px]">
      <div className="absolute left-[5px] top-[5px] w-[120px] h-[120px] rounded-full border-[12px] border-[#f6f6f6]/40" />
      <span className={`${letter} left-[55px] top-0`}>北</span>
      <span className={`${letter} left-[-1px] top-[56px]`}>西</span>
      <span className={`${letter} left-[111px] top-[56px]`}>东</span>
      <span className={`${letter} left-[55px] top-[113px]`}>南</span>
      <button
        type="button"
        className="absolute left-[39px] top-[39px] w-[52px] h-[52px] flex items-center justify-center border border-[#8e8e8e] bg-[#ececec]"
      >
        <span className={`w-8 h-8 bg-[#dee3e7] text-[26px] leading-8 font-light text-[#9a9fa3] ${CJK_FONT}`}>上</span>
      </button>
      <button
        type="button"
        className="absolute left-[42px] top-[152px] w-[46px] h-[17px] flex items-center justify-center gap-1.5 rounded bg-[#ebebf4] text-[11px] text-[#85858c] font-['Liberation_Sans',sans-serif]"
      >
        WCS
        <svg width="9" height="6" viewBox="0 0 9 6"><path d="M.5.5h8L4.500 5z" fill="#fff" stroke="#b9b9cc" /></svg>
      </button>
    </div>
  );
}

function NavBar() {
  return (
    <div className="absolute top-[211px] right-[3px] w-[35px] h-[212px] rounded-t-md border-2 border-[#b9b9b9]/80 bg-[#f2f2f2]/60">
      <svg width="31" height="206" viewBox="0 0 31 206" fill="none" stroke="#dadada">
        <circle cx="26" cy="5" r="3" />
        <path d="M6 20h20v10a10 10 0 1 1-20 0z" />
        <circle cx="16" cy="30" r="8" />
        <circle cx="16" cy="30" r="4.5" />
        <path d="M4 57.500h24M4 165.500h24" />
        <path d="M14 50h5l-2.500 3zM14 121h5l-2.500 3zM14 159h5l-2.500 3z" fill="#d3d3d3" />
        <path d="M12 84c-2-5-7-7-7-10 2-1 5 1 6 3l-2-9c0-2 3-2 3 0l2 6v-9c0-2 3-2 3 0v9l2-8c0-2 3-1 3 0l-1 10 3-4c2-1 3 0 2 2l-5 10z" />
        <path d="M5 92l14 14M19 92L5 106M5 95v-3h3M16 92h3v3M5 103v3h3" />
        <circle cx="22" cy="106" r="4.5" />
        <path d="M25 109l4 4" strokeWidth="2" />
        <ellipse cx="16" cy="142" rx="11" ry="5" />
        <path d="M14 128h4v26h-4zM13 128l3-4 3 4" />
        <path d="M6 172h20v20H6zM6 176h20M13 180v8l6-4z" />
      </svg>
    </div>
  );
}

/* ---------- things floating above the workspace ---------- */

function Annotations() {
  return (
    <svg className="absolute inset-0 w-full h-full pointer-events-none drop-shadow-[2px_3px_2px_rgba(0,0,0,0.45)]" fill="none">
      <rect x="267.500" y="347.500" width="206" height="180" stroke="#e3090c" strokeWidth="3" />
      <path d="M496 373L1202 387.500" stroke="#e3090c" strokeWidth="3" strokeLinecap="round" />
      <path d="M1198 380L1223 388L1198 395Z" fill="#e3090c" />
      <rect x="1240.500" y="377.500" width="44" height="31" stroke="#e3090c" strokeWidth="3" />
    </svg>
  );
}

function ExplodeTooltip() {
  return (
    <div
      role="tooltip"
      className={`absolute top-[412px] right-px w-[171px] rounded-xs border border-[#8a8a93] bg-linear-to-b from-white to-[#e3e3ef] text-xs text-[#4a4a4a] whitespace-nowrap shadow ${UI_FONT}`}
    >
      <div className="px-[7px] pt-1.5 pb-1.5">
        <h2 className="font-bold leading-5">分解</h2>
        <p className="mt-[3px] leading-5">将复合对象分解为其部件对象</p>
      </div>
      <div className="mx-px px-1.5 pt-1 pb-[5px] border-t border-[#a9a9b2] font-bold">
        <div className="flex items-center gap-1 leading-5">
          <svg width="16" height="16" viewBox="0 0 16 16">
            <path d="M0 1h14v14H0z" fill="#222" />
            <path d="M1 2h12v8H1z" fill="#f3f3a2" />
            <path d="M0 1h14" stroke="#1b2fb0" strokeWidth="2" />
            <path d="M2 10h14v6H2z" fill="#111" />
            <path d="M4 12h2M8 13.500h2M11 13.500h3" stroke="#ddd" />
          </svg>
          <span>EXPLODE</span>
        </div>
        <p className="mt-1 leading-5">按 F1 键获得更多帮助</p>
      </div>
    </div>
  );
}

function SiteBadge() {
  return (
    <div className="absolute top-[527px] right-[71px] w-[235px] h-[115px] flex items-center gap-[17px] pl-3.5 bg-[#232f56] text-[#cbccd1]">
      <svg width="48" height="52" viewBox="0 0 48 52" fill="none" stroke="currentColor" strokeWidth="4" className="shrink-0" strokeLinecap="round" strokeLinejoin="round">
        <path d="M16 41c-3 1-5.500 0-5.500-4V10c0-5 4-7 9-4.500C28 9 36 14 42 19c4 4 4 10 0 14-6 6-13 10-20 14-9 5-19 2-19.500-9C2 31 2 24 2.500 17c0-3 1-5 2.500-6" />
        <path d="M19 22v10l8-5z" fill="currentColor" strokeWidth="2" />
        <path d="M31 22v10" strokeWidth="2" strokeLinecap="butt" />
      </svg>
      <div className="w-[144px]">
        <div className={`flex justify-between text-[32px] leading-9 font-bold ${CJK_FONT}`}>
          <span>溜</span>
          <span>溜</span>
          <span>自</span>
          <span>学</span>
        </div>
        <div className="mt-px text-[17px] leading-5 text-center whitespace-nowrap font-['DejaVu_Sans',sans-serif]">zixue.3D66.COM</div>
      </div>
    </div>
  );
}

export default function App() {
  return (
    <div className="h-screen flex flex-col overflow-hidden bg-[#5c5c5c] select-none">
      <TitleBar />
      <MenuBar />
      <div className="h-[25px] shrink-0 bg-[#393939]" />
      <Toolbar />
      <main className="relative flex-1 min-h-0 flex">
        <section aria-label="模型空间" className="relative flex-1 min-w-0 bg-white overflow-hidden">
          <Drawing />
          <ViewCube />
          <NavBar />
        </section>
        <aside className="shrink-0 flex items-start gap-1 pl-[5px] pr-[3px] overflow-hidden bg-[#5c5c5c]">
          <Dock label="标注" tools={dimensionBar} />
          <Dock label="几何约束" tools={constraintBar} />
          <Dock label="对象捕捉" tools={snapBar} />
          <div className="flex flex-col gap-[77px]">
            <Dock label="修改" tools={modifyBar} />
            <Dock label="缩放" tools={zoomBar} />
          </div>
        </aside>
        <ExplodeTooltip />
        <SiteBadge />
        <Annotations />
      </main>
    </div>
  );
}
